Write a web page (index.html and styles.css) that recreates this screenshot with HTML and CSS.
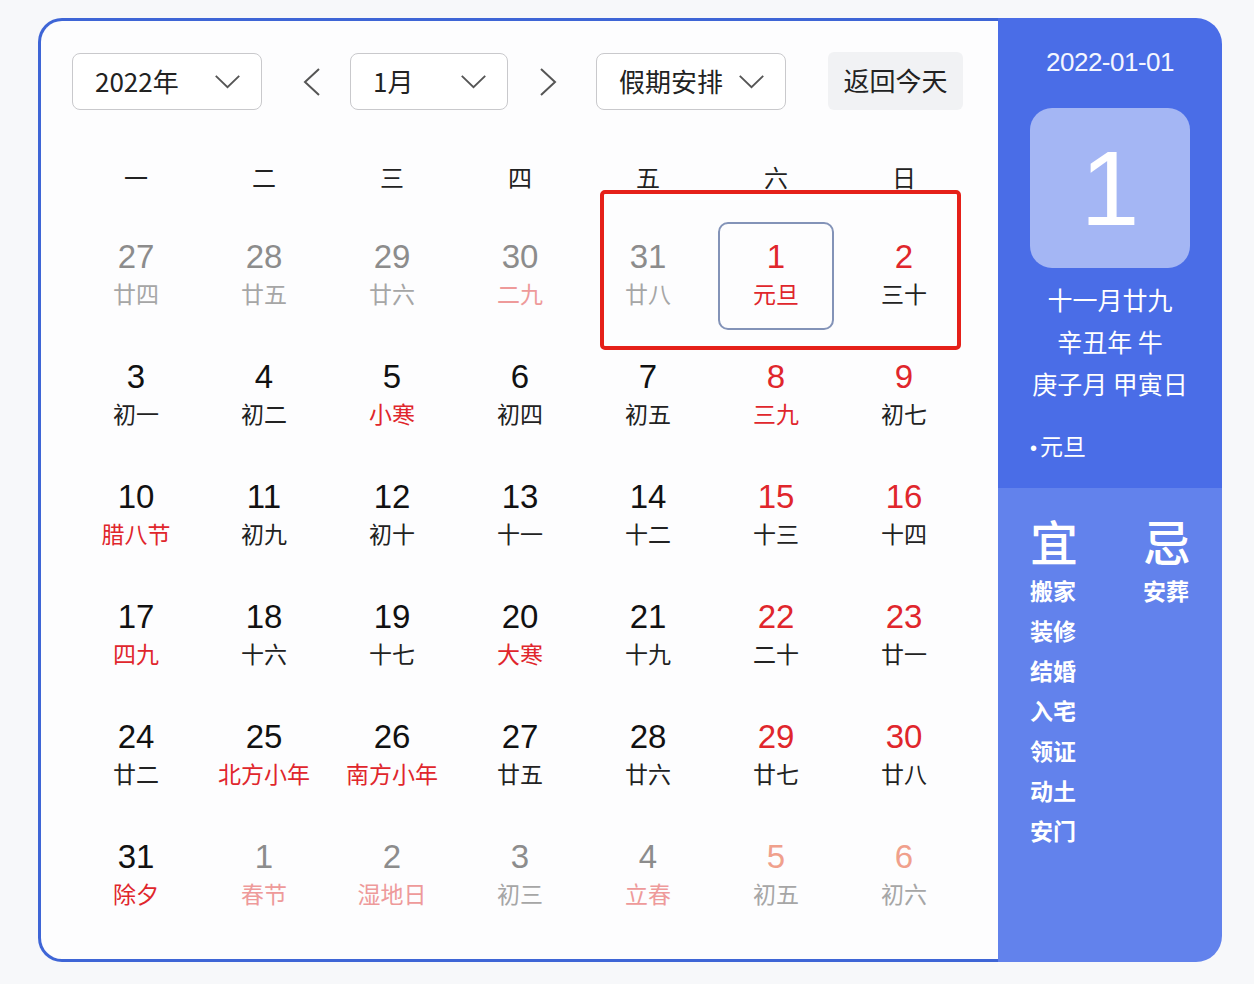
FILE: index.html
```html
<!DOCTYPE html>
<html lang="zh-CN">
<head>
<meta charset="utf-8">
<title>万年历</title>
<link rel="stylesheet" href="styles.css">
</head>
<body>
<div class="page">
  <div class="calendar">
    <div class="main">
      <div class="toolbar">
        <div class="select select-year"><span>2022年</span>
          <svg class="chev" viewBox="0 0 28 16"><polyline points="1.5,2 14,14 26.5,2"/></svg></div>
        <div class="arrow arrow-prev"><svg viewBox="0 0 20 30"><polyline points="17,2 3,15 17,28"/></svg></div>
        <div class="select select-month"><span>1月</span>
          <svg class="chev" viewBox="0 0 28 16"><polyline points="1.5,2 14,14 26.5,2"/></svg></div>
        <div class="arrow arrow-next"><svg viewBox="0 0 20 30"><polyline points="3,2 17,15 3,28"/></svg></div>
        <div class="select select-holiday"><span>假期安排</span>
          <svg class="chev" viewBox="0 0 28 16"><polyline points="1.5,2 14,14 26.5,2"/></svg></div>
        <div class="today-btn">返回今天</div>
      </div>

      <div class="weekdays">
        <div>一</div><div>二</div><div>三</div><div>四</div><div>五</div><div>六</div><div>日</div>
      </div>

      <div class="grid">
        <div class="cell other"><div class="day"><span class="num">27</span><span class="lunar">廿四</span></div></div>
        <div class="cell other"><div class="day"><span class="num">28</span><span class="lunar">廿五</span></div></div>
        <div class="cell other"><div class="day"><span class="num">29</span><span class="lunar">廿六</span></div></div>
        <div class="cell other"><div class="day"><span class="num">30</span><span class="lunar pale-red">二九</span></div></div>
        <div class="cell other"><div class="day"><span class="num">31</span><span class="lunar">廿八</span></div></div>
        <div class="cell"><div class="day selected"><span class="num red">1</span><span class="lunar red">元旦</span></div></div>
        <div class="cell"><div class="day"><span class="num red">2</span><span class="lunar">三十</span></div></div>

        <div class="cell"><div class="day"><span class="num">3</span><span class="lunar">初一</span></div></div>
        <div class="cell"><div class="day"><span class="num">4</span><span class="lunar">初二</span></div></div>
        <div class="cell"><div class="day"><span class="num">5</span><span class="lunar red">小寒</span></div></div>
        <div class="cell"><div class="day"><span class="num">6</span><span class="lunar">初四</span></div></div>
        <div class="cell"><div class="day"><span class="num">7</span><span class="lunar">初五</span></div></div>
        <div class="cell"><div class="day"><span class="num red">8</span><span class="lunar red">三九</span></div></div>
        <div class="cell"><div class="day"><span class="num red">9</span><span class="lunar">初七</span></div></div>

        <div class="cell"><div class="day"><span class="num">10</span><span class="lunar red">腊八节</span></div></div>
        <div class="cell"><div class="day"><span class="num">11</span><span class="lunar">初九</span></div></div>
        <div class="cell"><div class="day"><span class="num">12</span><span class="lunar">初十</span></div></div>
        <div class="cell"><div class="day"><span class="num">13</span><span class="lunar">十一</span></div></div>
        <div class="cell"><div class="day"><span class="num">14</span><span class="lunar">十二</span></div></div>
        <div class="cell"><div class="day"><span class="num red">15</span><span class="lunar">十三</span></div></div>
        <div class="cell"><div class="day"><span class="num red">16</span><span class="lunar">十四</span></div></div>

        <div class="cell"><div class="day"><span class="num">17</span><span class="lunar red">四九</span></div></div>
        <div class="cell"><div class="day"><span class="num">18</span><span class="lunar">十六</span></div></div>
        <div class="cell"><div class="day"><span class="num">19</span><span class="lunar">十七</span></div></div>
        <div class="cell"><div class="day"><span class="num">20</span><span class="lunar red">大寒</span></div></div>
        <div class="cell"><div class="day"><span class="num">21</span><span class="lunar">十九</span></div></div>
        <div class="cell"><div class="day"><span class="num red">22</span><span class="lunar">二十</span></div></div>
        <div class="cell"><div class="day"><span class="num red">23</span><span class="lunar">廿一</span></div></div>

        <div class="cell"><div class="day"><span class="num">24</span><span class="lunar">廿二</span></div></div>
        <div class="cell"><div class="day"><span class="num">25</span><span class="lunar red">北方小年</span></div></div>
        <div class="cell"><div class="day"><span class="num">26</span><span class="lunar red">南方小年</span></div></div>
        <div class="cell"><div class="day"><span class="num">27</span><span class="lunar">廿五</span></div></div>
        <div class="cell"><div class="day"><span class="num">28</span><span class="lunar">廿六</span></div></div>
        <div class="cell"><div class="day"><span class="num red">29</span><span class="lunar">廿七</span></div></div>
        <div class="cell"><div class="day"><span class="num red">30</span><span class="lunar">廿八</span></div></div>

        <div class="cell"><div class="day"><span class="num">31</span><span class="lunar red">除夕</span></div></div>
        <div class="cell other"><div class="day"><span class="num">1</span><span class="lunar pale-red">春节</span></div></div>
        <div class="cell other"><div class="day"><span class="num">2</span><span class="lunar pale-red">湿地日</span></div></div>
        <div class="cell other"><div class="day"><span class="num">3</span><span class="lunar">初三</span></div></div>
        <div class="cell other"><div class="day"><span class="num">4</span><span class="lunar pale-red">立春</span></div></div>
        <div class="cell other"><div class="day"><span class="num pale-red">5</span><span class="lunar">初五</span></div></div>
        <div class="cell other"><div class="day"><span class="num pale-red">6</span><span class="lunar">初六</span></div></div>
      </div>

      <div class="highlight-box"></div>
    </div>

    <div class="side">
      <div class="side-top">
        <div class="side-date">2022-01-01</div>
        <div class="big-day">1</div>
        <div class="side-lunar">
          <div>十一月廿九</div>
          <div>辛丑年 牛</div>
          <div>庚子月 甲寅日</div>
        </div>
        <div class="side-fest"><span class="dot">•</span>元旦</div>
      </div>
      <div class="side-bottom">
        <div class="yj-col yi">
          <div class="yj-title">宜</div>
          <div class="yj-item">搬家</div>
          <div class="yj-item">装修</div>
          <div class="yj-item">结婚</div>
          <div class="yj-item">入宅</div>
          <div class="yj-item">领证</div>
          <div class="yj-item">动土</div>
          <div class="yj-item">安门</div>
        </div>
        <div class="yj-col ji">
          <div class="yj-title">忌</div>
          <div class="yj-item">安葬</div>
        </div>
      </div>
    </div>
  </div>
</div>
</body>
</html>
```

FILE: styles.css
```css
* { box-sizing: border-box; }

html, body {
  margin: 0;
  padding: 0;
  background: #f7f8fa;
  font-family: "Liberation Sans", "Noto Sans CJK SC", sans-serif;
  color: #1a1a1a;
}

.page {
  padding: 18px 0 0 38px;
  height: 984px;
}

.calendar {
  display: flex;
  width: 1184px;
  height: 944px;
}

.main {
  position: relative;
  width: 960px;
  height: 100%;
  background: #fdfdfe;
  border: 3px solid #3e65d6;
  border-right: none;
  border-radius: 24px 0 0 24px;
  padding: 32px 0 0 31px;
}

/* toolbar */
.toolbar {
  display: flex;
  align-items: center;
  height: 57px;
}

.select {
  display: flex;
  align-items: center;
  justify-content: space-between;
  height: 57px;
  padding: 0 20px 0 22px;
  border: 1px solid #c9c9cc;
  border-radius: 8px;
  background: #fff;
  font-family: "Noto Sans CJK SC", sans-serif;
  font-size: 26px;
  color: #222;
}
.select span { margin-top: -2px; }
.select-year { width: 190px; }
.select-month { width: 158px; }
.select-holiday { width: 190px; }

.chev {
  width: 27px;
  height: 15px;
  flex-shrink: 0;
  fill: none;
  stroke: #555;
  stroke-width: 2;
}

.arrow {
  width: 20px;
  height: 30px;
  display: flex;
}
.arrow svg {
  width: 20px;
  height: 30px;
  fill: none;
  stroke: #555;
  stroke-width: 2;
}
.arrow-prev { margin: 0 28px 0 40px; }
.arrow-next { margin: 0 38px 0 30px; }

.today-btn {
  margin-left: 42px;
  margin-top: -2px;
  width: 135px;
  height: 58px;
  border-radius: 6px;
  background: #f1f2f4;
  display: flex;
  align-items: center;
  justify-content: center;
  padding-bottom: 3px;
  font-family: "Noto Sans CJK SC", sans-serif;
  font-size: 26px;
  color: #222;
}

/* weekdays */
.weekdays {
  display: grid;
  grid-template-columns: repeat(7, 128px);
  margin-top: 38px;
  height: 56px;
  margin-bottom: 12px;
}
.weekdays div {
  display: flex;
  align-items: center;
  justify-content: center;
  font-family: "Noto Sans CJK SC", sans-serif;
  font-size: 24px;
  color: #222;
}

/* grid */
.grid {
  display: grid;
  grid-template-columns: repeat(7, 128px);
  grid-auto-rows: 120px;
}

.cell {
  padding: 6px;
}

.day {
  height: 100%;
  border: 2px solid transparent;
  border-radius: 10px;
  display: flex;
  flex-direction: column;
  align-items: center;
  justify-content: center;
  padding-bottom: 8px;
}
.day.selected {
  border-color: #8393b8;
}

.num {
  font-family: "Liberation Sans", sans-serif;
  font-size: 33px;
  line-height: 40px;
  color: #111;
}
.lunar {
  margin-top: 1px;
  font-family: "Noto Sans CJK SC", sans-serif;
  font-size: 23px;
  line-height: 30px;
  color: #222;
  white-space: nowrap;
}

.red { color: #e0262c; }
.num.red { color: #e0262c; }
.lunar.red { color: #e0262c; }

.other .num { color: #8c8c8c; }
.other .lunar { color: #a6a6a6; }
.other .lunar.pale-red { color: #ee9a9a; }
.other .num.pale-red { color: #f0a08c; }

/* annotation overlay */
.highlight-box {
  position: absolute;
  left: 559px;
  top: 169px;
  width: 361px;
  height: 160px;
  border: 4px solid #e52019;
  border-radius: 5px;
  pointer-events: none;
}

/* side panel */
.side {
  width: 224px;
  height: 100%;
  border-radius: 0 26px 26px 0;
  overflow: hidden;
  display: flex;
  flex-direction: column;
  color: #fff;
}

.side-top {
  height: 470px;
  background: #4a6de7;
  padding: 28px 0 0 32px;
}

.side-date {
  width: 160px;
  text-align: center;
  font-family: "Liberation Sans", sans-serif;
  font-size: 26px;
  line-height: 32px;
  letter-spacing: -0.5px;
  color: #f4f6ff;
}

.big-day {
  margin-top: 30px;
  width: 160px;
  height: 160px;
  border-radius: 22px;
  background: #a4b6f4;
  display: flex;
  align-items: center;
  justify-content: center;
  font-family: "Liberation Sans", sans-serif;
  font-size: 106px;
  color: #fff;
}

.side-lunar {
  margin-top: 10px;
  width: 160px;
  text-align: center;
  font-family: "Noto Sans CJK SC", sans-serif;
  font-size: 25px;
  line-height: 42px;
  white-space: nowrap;
}
.side-lunar div {
  margin-left: -10px;
  margin-right: -10px;
}

.side-fest {
  margin-top: 20px;
  font-family: "Noto Sans CJK SC", sans-serif;
  font-size: 23px;
  line-height: 42px;
}
.side-fest .dot {
  font-family: "Liberation Sans", sans-serif;
  font-size: 20px;
  margin-right: 3px;
}

.side-bottom {
  flex: 1;
  background: #6282ec;
  display: flex;
  padding: 22px 0 0 32px;
}

.yj-col.yi { width: 113px; }

.yj-title {
  font-family: "Noto Sans CJK SC", sans-serif;
  font-size: 48px;
  line-height: 60px;
  font-weight: 500;
}

.yj-item {
  font-family: "Noto Sans CJK SC", sans-serif;
  font-size: 23px;
  line-height: 40px;
  font-weight: 700;
}
```
